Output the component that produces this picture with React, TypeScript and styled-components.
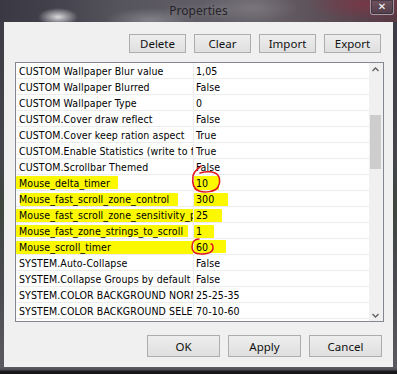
import React from 'react';
import styled, { createGlobalStyle } from 'styled-components';

const GlobalStyle = createGlobalStyle`
  html, body { margin: 0; padding: 0; background: #2a2a30; }
  #root { width: 397px; height: 374px; }
  * { box-sizing: border-box; }
`;

const Window = styled.div`
  width: 397px;
  height: 374px;
  display: flex;
  flex-direction: column;
  overflow: hidden;
  background: linear-gradient(180deg, #3c3b45 0%, #45444c 40%, #3e463f 55%, #4a4950 75%, #5c5b61 100%);
`;

const TitleBar = styled.div`
  height: 22px;
  display: grid;
  grid-template-columns: 1fr auto 1fr;
  align-items: start;
  background:
    radial-gradient(ellipse 20px 9px at 58px 17px, rgba(255, 255, 255, 0.8), rgba(255, 255, 255, 0) 100%),
    radial-gradient(ellipse 45px 12px at 150px 20px, rgba(205, 205, 210, 0.35), rgba(205, 205, 210, 0) 100%),
    radial-gradient(ellipse 50px 14px at 250px 8px, rgba(140, 135, 140, 0.5), rgba(140, 135, 140, 0) 100%),
    radial-gradient(ellipse 60px 16px at 365px 4px, rgba(140, 50, 70, 0.6), rgba(140, 50, 70, 0) 100%),
    linear-gradient(90deg, #393843 0%, #42404b 12%, #55535b 30%, #605d66 50%, #67636a 65%, #5b4e56 82%, #563843 100%);
`;

const Title = styled.div`
  grid-column: 2;
  padding-top: 3px;
  font-family: "Noto Sans", "Open Sans", sans-serif;
  font-size: 12px;
  line-height: 16px;
  color: #262429;
  text-shadow: 0 0 6px rgba(255, 255, 255, 0.25);
`;

const CloseButton = styled.div`
  grid-column: 3;
  justify-self: end;
  margin-right: 3px;
  width: 24px;
  height: 15px;
  border: 1px solid rgba(190, 185, 195, 0.7);
  border-top: none;
  border-radius: 0 0 3px 3px;
  background: linear-gradient(180deg, rgba(110, 100, 110, 0.6), rgba(70, 65, 75, 0.6));
  box-shadow: inset 0 0 0 1px rgba(40, 35, 45, 0.5);
  display: flex;
  align-items: center;
  justify-content: center;
  color: #ffffff;
  font-family: "DejaVu Sans", sans-serif;
  font-weight: bold;
  font-size: 10px;
  line-height: 1;
`;

const Body = styled.div`
  flex: 1;
  display: flex;
  padding: 0 4px;
`;

const Client = styled.div`
  flex: 1;
  background: #f0f0f0;
  display: flex;
  flex-direction: column;
  padding: 12px 0 10px 0;
`;

const BottomFrame = styled.div`
  height: 7px;
  background: linear-gradient(180deg, #5d5c62 0px, #4e4d53 3px, #1c1b1f 4px, #141416 100%);
`;

const ButtonRow = styled.div<{ $gap: number; $right: number }>`
  display: flex;
  justify-content: flex-end;
  gap: ${(p) => p.$gap}px;
  padding-right: ${(p) => p.$right}px;
`;

const Button = styled.div<{ $w: number; $h: number }>`
  width: ${(p) => p.$w}px;
  height: ${(p) => p.$h}px;
  border: 1px solid #adadad;
  background: linear-gradient(180deg, #eeeeee 0%, #e6e6e6 50%, #dfdfdf 100%);
  display: flex;
  align-items: center;
  justify-content: center;
  font-family: "Noto Sans", "Open Sans", sans-serif;
  font-size: 11.5px;
  color: #111;
`;

const Grid = styled.div`
  margin: 9px 9px 13px 11px;
  height: 260px;
  border: 1px solid #828790;
  background: #ffffff;
  display: flex;
  overflow: hidden;
`;

const Rows = styled.div`
  width: 353px;
  position: relative;
`;

const Row = styled.div`
  display: grid;
  grid-template-columns: 178px 175px;
  height: 16px;
  border-bottom: 1px solid #ececec;
`;

const Cell = styled.div<{ $pad: number; $sep?: boolean }>`
  position: relative;
  overflow: hidden;
  white-space: nowrap;
  padding: 1px 0 0 ${(p) => p.$pad}px;
  border-right: ${(p) => (p.$sep ? '1px solid #ececec' : 'none')};
  font-family: "DejaVu Sans Condensed", "DejaVu Sans", sans-serif;
  font-stretch: condensed;
  font-size: 10.5px;
  letter-spacing: 0.1px;
  line-height: 14px;
  color: #000;
`;

const CellText = styled.span`
  position: relative;
  z-index: 1;
`;

const Mark = styled.span<{ $l: number; $t: number; $w: number; $h: number }>`
  position: absolute;
  left: ${(p) => p.$l}px;
  top: ${(p) => p.$t}px;
  width: ${(p) => p.$w}px;
  height: ${(p) => p.$h}px;
  background: #fbf800;
  border-radius: 1px;
  z-index: 0;
`;

const Scribble = styled.svg<{ $l: number; $t: number }>`
  position: absolute;
  left: ${(p) => p.$l}px;
  top: ${(p) => p.$t}px;
  z-index: 2;
  overflow: visible;
`;

const ScrollBar = styled.div`
  width: 14px;
  background: #f0f0f0;
  display: flex;
  flex-direction: column;
`;

const ArrowBox = styled.div`
  height: 12px;
  display: flex;
  align-items: center;
  justify-content: center;
  padding-right: 1px;
`;

const Track = styled.div`
  flex: 1;
`;

const Thumb = styled.div`
  margin: 40px 0 0 1px;
  width: 11px;
  height: 54px;
  background: #cdcdcd;
`;

type M = { l: number; t: number; w: number; h: number };
type RowData = { name: string; value: string; nm?: M; vm?: M };

const rows: RowData[] = [
  { name: 'CUSTOM Wallpaper Blur value', value: '1,05' },
  { name: 'CUSTOM Wallpaper Blurred', value: 'False' },
  { name: 'CUSTOM Wallpaper Type', value: '0' },
  { name: 'CUSTOM.Cover draw reflect', value: 'False' },
  { name: 'CUSTOM.Cover keep ration aspect', value: 'True' },
  { name: 'CUSTOM.Enable Statistics (write to file)', value: 'True' },
  { name: 'CUSTOM.Scrollbar Themed', value: 'False' },
  { name: 'Mouse_delta_timer', value: '10', nm: { l: 0, t: 1, w: 102, h: 13 }, vm: { l: 0, t: 1, w: 25, h: 14 } },
  { name: 'Mouse_fast_scroll_zone_control', value: '300', nm: { l: 4, t: 2, w: 158, h: 13 }, vm: { l: 0, t: 2, w: 34, h: 14 } },
  { name: 'Mouse_fast_scroll_zone_sensitivity_percent', value: '25', nm: { l: 0, t: 2, w: 178, h: 13 }, vm: { l: 0, t: 2, w: 28, h: 14 } },
  { name: 'Mouse_fast_zone_strings_to_scroll', value: '1', nm: { l: 0, t: 2, w: 172, h: 12 }, vm: { l: 0, t: 2, w: 20, h: 13 } },
  { name: 'Mouse_scroll_timer', value: '60', nm: { l: 0, t: 2, w: 178, h: 13 }, vm: { l: 0, t: 1, w: 32, h: 13 } },
  { name: 'SYSTEM.Auto-Collapse', value: 'False' },
  { name: 'SYSTEM.Collapse Groups by default', value: 'False' },
  { name: 'SYSTEM.COLOR BACKGROUND NORMAL', value: '25-25-35' },
  { name: 'SYSTEM.COLOR BACKGROUND SELECTED', value: '70-10-60' },
];

const Chevron = ({ up }: { up: boolean }) => (
  <svg width="7" height="5" viewBox="0 0 7 5">
    <path
      d={up ? 'M0.5 4 L3.5 1 L6.5 4' : 'M0.5 1 L3.5 4 L6.5 1'}
      fill="none"
      stroke="#5f5f5f"
      strokeWidth="1.3"
    />
  </svg>
);

export default function App() {
  return (
    <>
      <GlobalStyle />
      <Window>
        <TitleBar>
          <Title>Properties</Title>
          <CloseButton>✕</CloseButton>
        </TitleBar>
        <Body>
          <Client>
            <ButtonRow $gap={8} $right={12}>
              {['Delete', 'Clear', 'Import', 'Export'].map((b) => (
                <Button key={b} $w={57} $h={19}>
                  {b}
                </Button>
              ))}
            </ButtonRow>
            <Grid>
              <Rows>
                {rows.map((r) => (
                  <Row key={r.name}>
                    <Cell $pad={3} $sep>
                      {r.nm && <Mark $l={r.nm.l} $t={r.nm.t} $w={r.nm.w} $h={r.nm.h} />}
                      <CellText>{r.name}</CellText>
                    </Cell>
                    <Cell $pad={2}>
                      {r.vm && <Mark $l={r.vm.l} $t={r.vm.t} $w={r.vm.w} $h={r.vm.h} />}
                      <CellText>{r.value}</CellText>
                    </Cell>
                  </Row>
                ))}
                <Scribble $l={174} $t={103} width="34" height="32" viewBox="0 0 34 32">
                  <path
                    d="M11 0 C8 3, 4 5, 3 10 C2 17, 3 23, 9 25 C15 27, 25 26, 28 21 C31 16, 30 9, 25 7 C20 5, 14 6, 10 7"
                    fill="none"
                    stroke="#e0141e"
                    strokeWidth="1.5"
                    strokeLinecap="round"
                  />
                </Scribble>
                <Scribble $l={174} $t={173} width="28" height="22" viewBox="0 0 28 22">
                  <path
                    d="M9 3 C5 3, 2 6, 2 11 C2 16, 5 18, 11 18 C17 18, 23 17, 23 12 C23 9, 22 8, 21 8"
                    fill="none"
                    stroke="#e0141e"
                    strokeWidth="1.5"
                    strokeLinecap="round"
                  />
                </Scribble>
              </Rows>
              <ScrollBar>
                <ArrowBox>
                  <Chevron up />
                </ArrowBox>
                <Track>
                  <Thumb />
                </Track>
                <ArrowBox>
                  <Chevron up={false} />
                </ArrowBox>
              </ScrollBar>
            </Grid>
            <ButtonRow $gap={8} $right={11}>
              {['OK', 'Apply', 'Cancel'].map((b) => (
                <Button key={b} $w={73} $h={22}>
                  {b}
                </Button>
              ))}
            </ButtonRow>
          </Client>
        </Body>
        <BottomFrame />
      </Window>
    </>
  );
}
